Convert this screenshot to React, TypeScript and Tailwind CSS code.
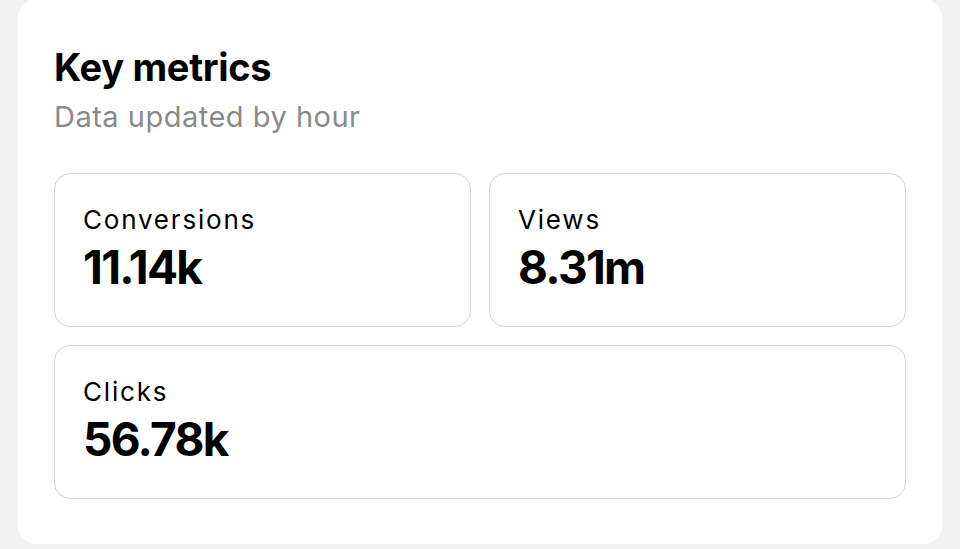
import React from "react";

function Metric({ label, value, className = "" }: { label: string; value: string; className?: string }) {
  return (
    <div className={"rounded-[16px] border border-[#d6d6d6] bg-white pl-[28px] pr-6 pt-[30px] pb-[33px] " + className}>
      <div className="text-[26px] leading-[32px] text-black tracking-[1.8px]">{label}</div>
      <div className="mt-[5px] text-[46px] leading-[52px] font-bold text-black tracking-[-1.7px]">{value}</div>
    </div>
  );
}

export default function App() {
  return (
    <div className="min-h-[549px] bg-[#f2f2f2] px-[18px] pb-[5px]" style={{ fontFamily: "Inter, 'Noto Sans', sans-serif" }}>
      <div className="-mt-px rounded-[18px] bg-white px-[36px] pt-[46px] pb-[45px]">
        <h1 className="text-[38px] leading-[44px] font-bold text-black tracking-[-0.3px]">Key metrics</h1>
        <p className="mt-[11px] text-[29px] leading-[34px] text-[#8a8a8a] tracking-[0.5px]">Data updated by hour</p>
        <div className="mt-[39px] grid grid-cols-2 gap-[18px]">
          <Metric label="Conversions" value="11.14k" />
          <Metric label="Views" value="8.31m" />
          <Metric label="Clicks" value="56.78k" className="col-span-2" />
        </div>
      </div>
    </div>
  );
}
